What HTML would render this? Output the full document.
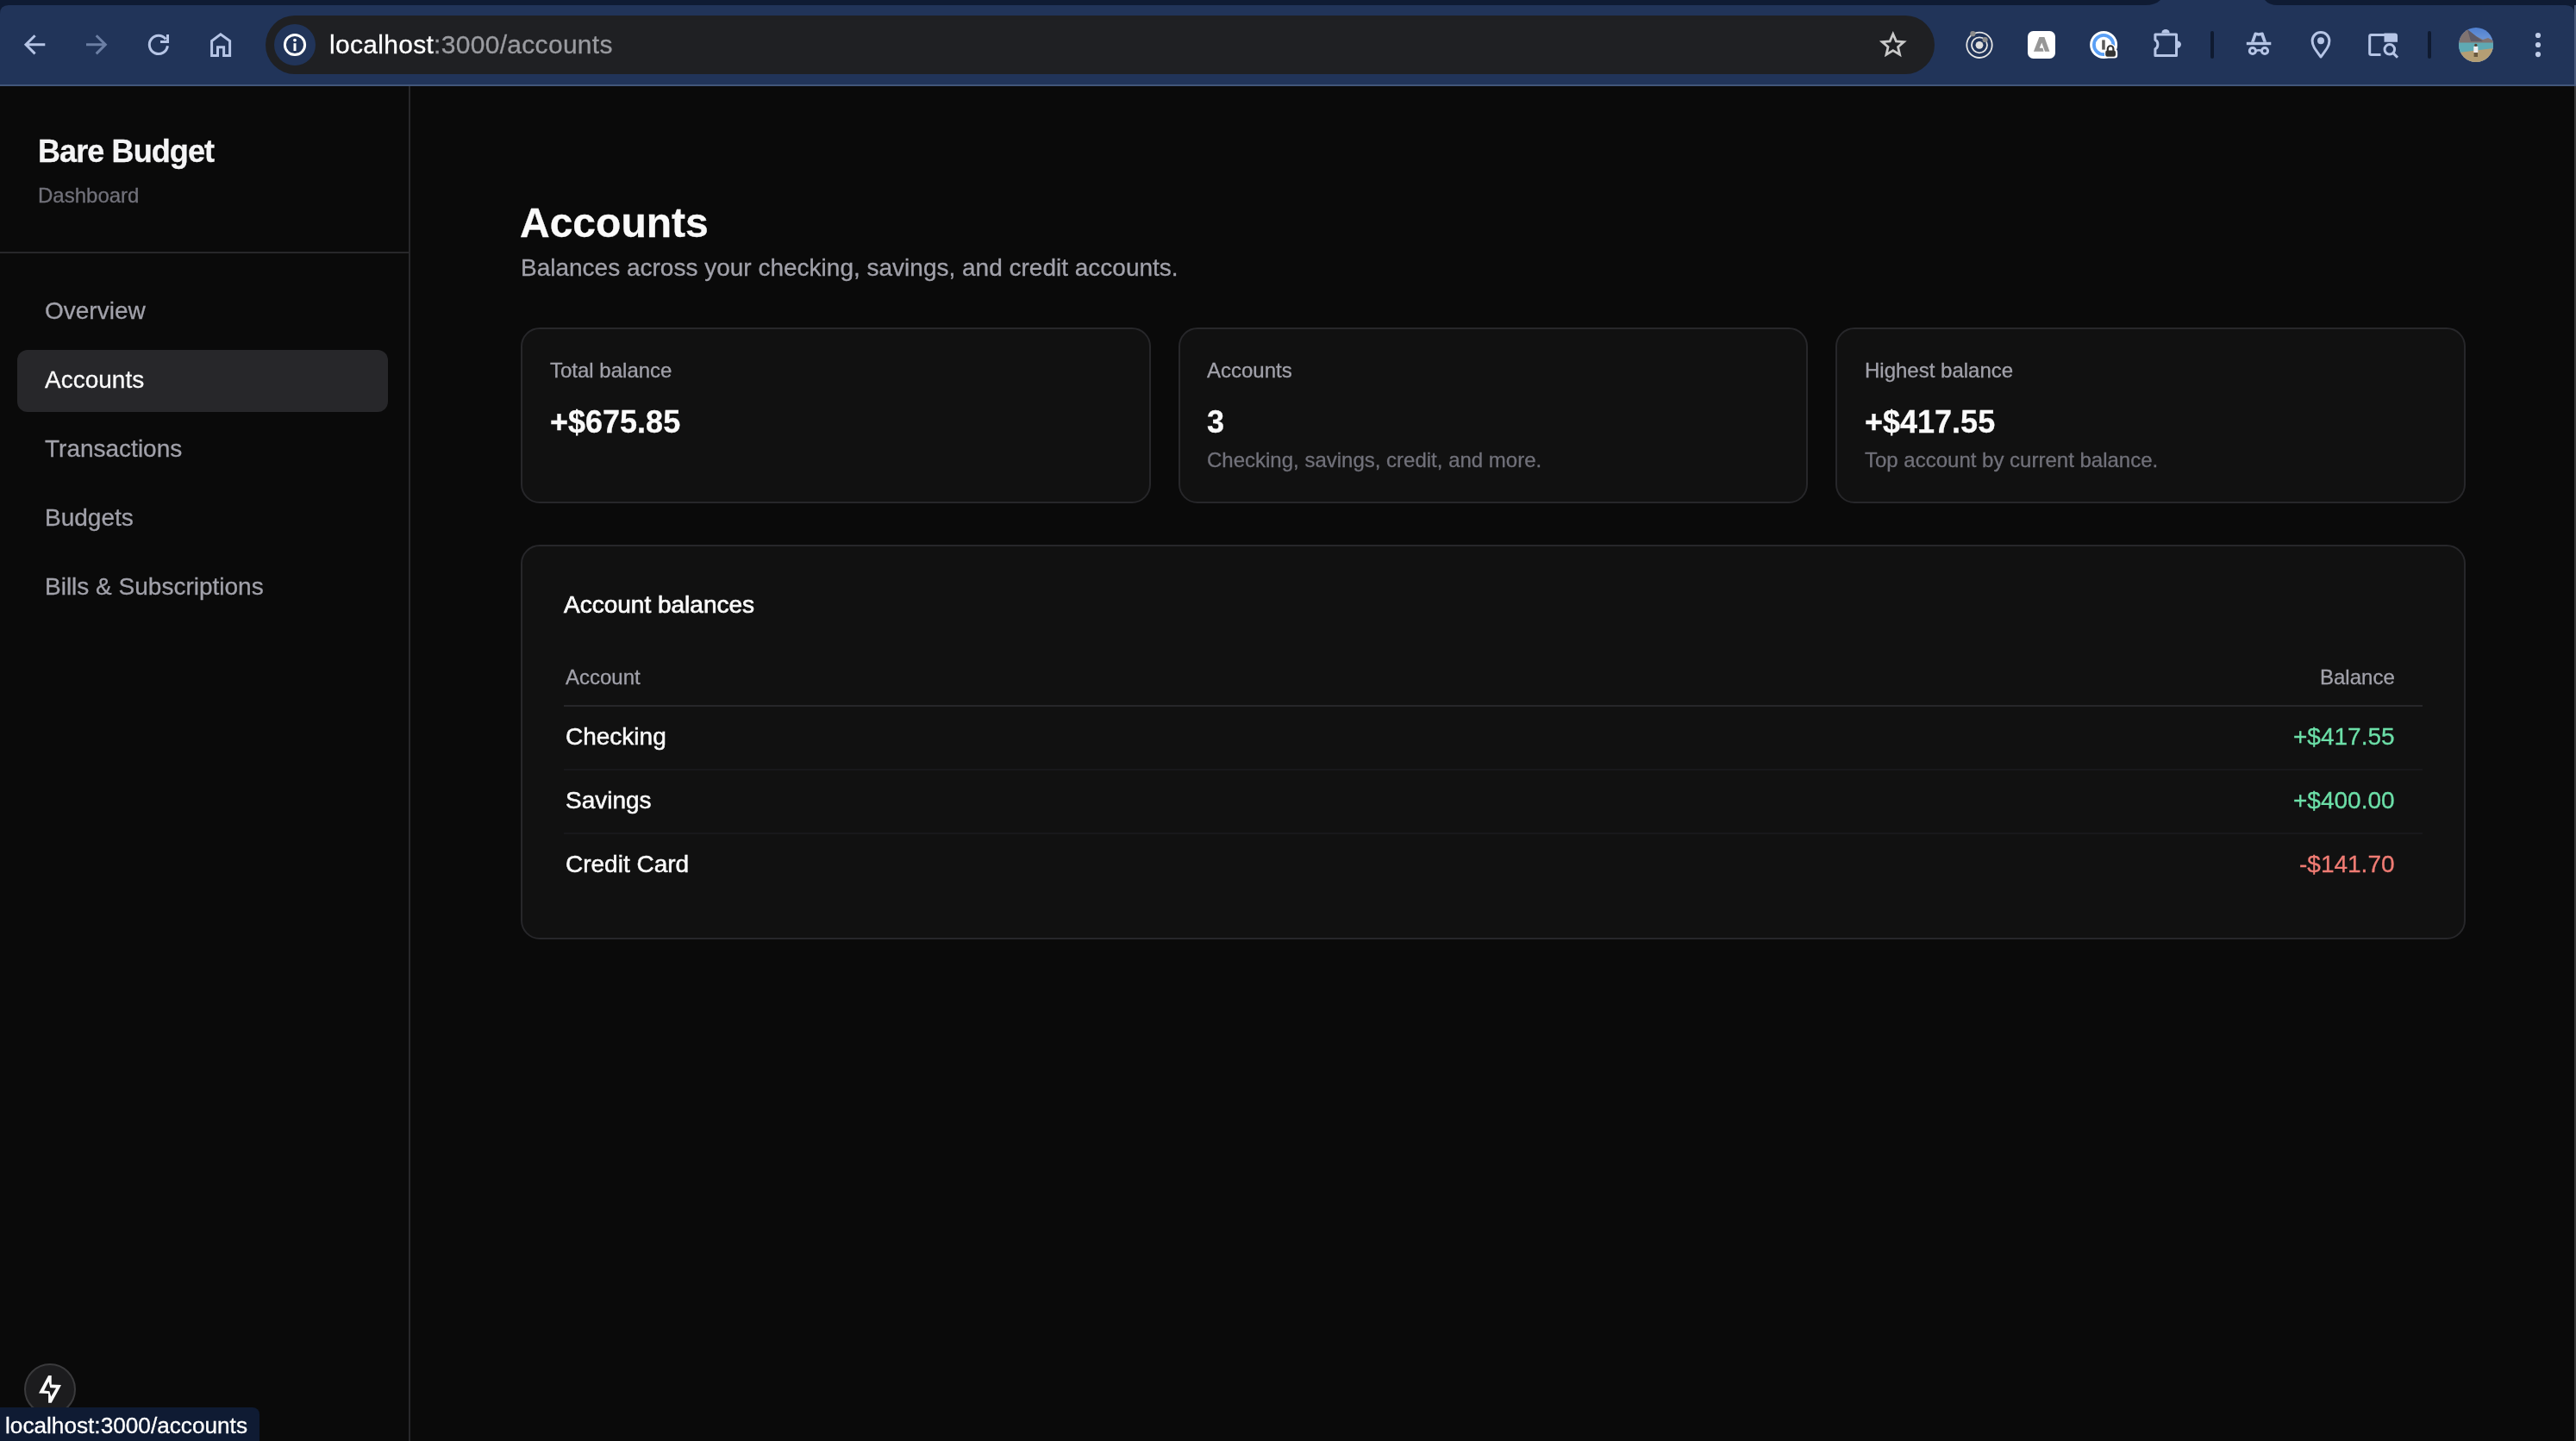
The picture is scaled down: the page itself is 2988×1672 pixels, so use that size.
<!DOCTYPE html>
<html><head><meta charset="utf-8">
<style>
*{margin:0;padding:0;box-sizing:border-box}
html,body{width:2988px;height:1672px;overflow:hidden;background:#0a0a0a;font-family:"Liberation Sans",sans-serif}
.a{position:absolute;white-space:nowrap;will-change:transform;-webkit-text-stroke:0.3px currentColor}
#side{position:absolute;left:0;top:100px;width:474px;height:1572px;background:#0a0a0a}
#sline{position:absolute;left:0;top:292px;width:474px;height:2px;background:#27272a}
#vline{position:absolute;left:474px;top:100px;width:2px;height:1572px;background:#27272a}
#pill{position:absolute;left:20px;top:406px;width:430px;height:72px;border-radius:12px;background:#27272a}
.card{position:absolute;top:380px;height:204px;width:731px;border:2px solid #27272a;border-radius:22px;background:#111111}
#tcard{position:absolute;left:604px;top:632px;width:2256px;height:458px;border:2px solid #27272a;border-radius:22px;background:#111111}
.hl{position:absolute;height:2px}
#rb{position:absolute;left:2986px;top:100px;width:2px;height:1572px;background:#3a3a3a}
</style></head><body>
<svg id="chrome" width="2988" height="100" viewBox="0 0 2988 100" style="position:absolute;left:0;top:0">
<rect x="0" y="0" width="2988" height="100" fill="#0f1b33"/>
<path d="M0 16 Q0 6 10 6 H2488 Q2500 6 2506 0 H2627 Q2632 6 2642 6 H2976 Q2986 6 2986 16 V98 H0 Z" fill="#213459"/>
<rect x="0" y="98" width="2988" height="2" fill="#42567a"/>
<rect x="2986" y="6" width="2" height="94" fill="#4a5b7c"/>
<g fill="none" stroke="#b6c5e6" stroke-width="3" stroke-linecap="butt">
<path d="M52.3 51.8 H30.5 M40.6 41.2 L30 51.8 L40.6 62.4" stroke-linejoin="miter"/>
<path d="M100 51.8 H121.8 M111.7 41.2 L122.3 51.8 L111.7 62.4" stroke="#6c7fa4"/>
<path d="M194.4 53.3 A10.6 10.6 0 1 1 192.3 45.5"/>
<path d="M186 48.5 H194.5 V40" stroke-linejoin="miter"/>
<path d="M252.5 64.6 H245.6 V47.5 L255.9 39.8 L266.6 47.5 V64.6 H259.6 V54.8 H252.5 Z" stroke-linejoin="miter"/>
</g>
<rect x="308" y="18" width="1936" height="68" rx="34" fill="#1f2023"/>
<circle cx="342" cy="52" r="24" fill="#213459"/>
<circle cx="342" cy="52" r="11.6" fill="none" stroke="#fff" stroke-width="3"/>
<circle cx="342" cy="46.6" r="1.9" fill="#fff"/>
<rect x="340.5" y="50.2" width="3" height="8.8" fill="#fff"/>
<path transform="translate(2195.8 52) scale(0.93) translate(-2195.8 -52)" d="M2195.8 38.5 L2199.7 47.6 L2209.3 48.4 L2202 54.7 L2204.2 64.2 L2195.8 59.1 L2187.4 64.2 L2189.6 54.7 L2182.3 48.4 L2191.9 47.6 Z" fill="none" stroke="#c9c9c9" stroke-width="3" stroke-linejoin="miter"/>
<circle cx="2296" cy="52.3" r="14.7" fill="none" stroke="#e6e6e6" stroke-width="1.8"/>
<circle cx="2296" cy="52.3" r="9" fill="none" stroke="#e6e6e6" stroke-width="1.8"/>
<circle cx="2296" cy="52.3" r="4.4" fill="#dedede"/>
<circle cx="2288.4" cy="39.2" r="3.1" fill="#8c8c8c"/>
<circle cx="2302.6" cy="46" r="3.1" fill="#8c8c8c"/>
<rect x="2352" y="36" width="32" height="32" rx="6.5" fill="#fff"/>
<path d="M2358.9 59.7 L2365.4 43 H2371.4 L2377.4 59.7 H2372 L2368.3 49.5 L2365.7 55.8 H2369.5 L2370.5 59.7 Z" fill="#979797"/>
<circle cx="2440.1" cy="52" r="16" fill="#fff"/>
<circle cx="2440.1" cy="52" r="11.2" fill="none" stroke="#5a9ff5" stroke-width="3.8"/>
<rect x="2438.2" y="46.4" width="3.5" height="11.2" fill="#595959"/>
<rect x="2441" y="57" width="15.2" height="10.6" rx="3.5" fill="#fff"/>
<path d="M2444.8 59.5 V56.5 A3.3 3.3 0 0 1 2451.4 56.5 V59.5" fill="#fff" stroke="#fff" stroke-width="5"/>
<path d="M2444.8 59.5 V56.5 A3.3 3.3 0 0 1 2451.4 56.5 V59.5" fill="none" stroke="#333" stroke-width="2.2"/>
<rect x="2442.2" y="58.6" width="11.8" height="7.2" rx="2.2" fill="#333"/>
<path d="M2499.9 39.9 H2524.5 V64.4 H2499.9 V57 C2503.5 55.5 2504.2 48 2499.9 46.3 Z" fill="none" stroke="#b6c5e6" stroke-width="3" stroke-linejoin="round"/>
<path d="M2507.3 38.6 A4.7 4.7 0 0 1 2516.7 38.6 Z" fill="#b6c5e6"/>
<path d="M2525.8 47.4 A4.2 4.2 0 0 1 2525.8 55.8 Z" fill="#b6c5e6"/>
<rect x="2564" y="36" width="4" height="32" rx="2" fill="#0f1a30"/>
<rect x="2816" y="36" width="4" height="32" rx="2" fill="#0f1a30"/>
<g fill="#b6c5e6">
<rect x="2605.8" y="48.8" width="28.5" height="3.4"/>
<path d="M2611 48.8 L2614.6 38.4 Q2615.1 37.3 2616.3 37.5 L2619.3 38.1 Q2620 38.5 2620.7 38.1 L2624 37.5 Q2625.2 37.3 2625.6 38.4 L2629.1 48.8 H2625.3 L2622.5 41.2 L2620 41.8 L2617.3 41.2 L2614.8 48.8 Z"/>
</g>
<g fill="none" stroke="#b6c5e6" stroke-width="3">
<circle cx="2612.9" cy="59" r="3.6"/>
<circle cx="2627" cy="59" r="3.6"/>
<path d="M2616.2 59.2 Q2620 57.2 2623.8 59.2" stroke-width="2.4"/>
<path d="M2692 66 C2686 58 2682.1 53.5 2682.1 47.3 A9.9 9.9 0 0 1 2701.9 47.3 C2701.9 53.5 2698 58 2692 66 Z" stroke-linejoin="round"/>
<path d="M2761.5 63.6 H2750.5 Q2748.7 63.6 2748.7 61.8 V42.2 Q2748.7 40.4 2750.5 40.4 H2766"/>
<circle cx="2771.8" cy="57.3" r="5.8"/>
<path d="M2776 61.6 L2781 66.8"/>
</g>
<circle cx="2692" cy="47.3" r="4" fill="#b6c5e6"/>
<path d="M2765.5 38.6 H2778 Q2781 38.6 2781 41.6 V48.8 H2765.5 Z" fill="#b6c5e6"/>
<defs><clipPath id="av"><circle cx="2872" cy="52" r="20"/></clipPath>
<linearGradient id="sky" x1="0" y1="0" x2="0" y2="1"><stop offset="0" stop-color="#4f7fcf"/><stop offset="1" stop-color="#9dbde6"/></linearGradient></defs>
<g clip-path="url(#av)">
<rect x="2852" y="32" width="40" height="40" fill="url(#sky)"/>
<path d="M2852 51 L2852 42 L2862 34 L2872 42 L2880 46 L2886 44 L2892 47 L2892 51 Z" fill="#7f7371"/>
<path d="M2862 34 L2872 42 L2880 48 L2866 48 Z" fill="#5d5a66"/>
<rect x="2852" y="49.5" width="40" height="12" fill="#5fa9b3"/>
<path d="M2852 61 L2892 56 L2892 72 L2852 72 Z" fill="#b49e74"/>
<rect x="2869.3" y="54" width="5" height="7" fill="#f0eef0"/>
<rect x="2869.6" y="61" width="4.4" height="5" fill="#6b5a40"/>
<circle cx="2871.8" cy="52.3" r="1.6" fill="#5a3e30"/>
</g>
<g fill="#bfcce8"><circle cx="2944" cy="41" r="3.1"/><circle cx="2944" cy="52" r="3.1"/><circle cx="2944" cy="63.1" r="3.1"/></g>
</svg>
<div class="a" style="left:382px;top:28px;font-size:30px;line-height:48px;color:#fff;letter-spacing:0.3px">localhost<span style="color:#9a9ba0">:3000/accounts</span></div>

<div id="side"></div>
<div id="sline"></div>
<div id="vline"></div>
<div id="pill"></div>
<div class="a" style="left:44px;top:152px;font-size:36px;line-height:48px;font-weight:bold;color:#f4f4f5;letter-spacing:-0.9px">Bare Budget</div>
<div class="a" style="left:44px;top:211px;font-size:24px;line-height:32px;color:#71717a">Dashboard</div>
<div class="a" style="left:52px;top:341px;font-size:28px;line-height:40px;color:#a1a1aa">Overview</div>
<div class="a" style="left:52px;top:421px;font-size:28px;line-height:40px;color:#fafafa">Accounts</div>
<div class="a" style="left:52px;top:501px;font-size:28px;line-height:40px;color:#a1a1aa">Transactions</div>
<div class="a" style="left:52px;top:581px;font-size:28px;line-height:40px;color:#a1a1aa">Budgets</div>
<div class="a" style="left:52px;top:661px;font-size:28px;line-height:40px;color:#a1a1aa">Bills &amp; Subscriptions</div>

<div class="a" style="left:603px;top:227px;font-size:48px;line-height:64px;font-weight:bold;color:#fafafa">Accounts</div>
<div class="a" style="left:604px;top:291px;font-size:28px;line-height:40px;color:#a1a1aa">Balances across your checking, savings, and credit accounts.</div>

<div class="card" style="left:604px"></div>
<div class="card" style="left:1367px;width:730px"></div>
<div class="card" style="left:2129px"></div>

<div class="a" style="left:638px;top:414px;font-size:24px;line-height:32px;color:#a1a1aa">Total balance</div>
<div class="a" style="left:638px;top:466px;font-size:36px;line-height:48px;font-weight:bold;color:#fafafa">+$675.85</div>

<div class="a" style="left:1400px;top:414px;font-size:24px;line-height:32px;color:#a1a1aa">Accounts</div>
<div class="a" style="left:1400px;top:466px;font-size:36px;line-height:48px;font-weight:bold;color:#fafafa">3</div>
<div class="a" style="left:1400px;top:518px;font-size:24px;line-height:32px;color:#71717a">Checking, savings, credit, and more.</div>

<div class="a" style="left:2163px;top:414px;font-size:24px;line-height:32px;color:#a1a1aa">Highest balance</div>
<div class="a" style="left:2163px;top:466px;font-size:36px;line-height:48px;font-weight:bold;color:#fafafa">+$417.55</div>
<div class="a" style="left:2163px;top:518px;font-size:24px;line-height:32px;color:#71717a">Top account by current balance.</div>

<div id="tcard"></div>
<div class="a" style="left:654px;top:682px;font-size:28px;line-height:40px;color:#fafafa;-webkit-text-stroke:0.7px #fafafa">Account balances</div>
<div class="a" style="left:656px;top:770px;font-size:24px;line-height:32px;color:#a1a1aa">Account</div>
<div class="a" style="right:210px;top:770px;font-size:24px;line-height:32px;color:#a1a1aa">Balance</div>
<div class="hl" style="left:654px;top:818px;width:2156px;background:#27272a"></div>
<div class="a" style="left:656px;top:835px;font-size:28px;line-height:40px;color:#fafafa;-webkit-text-stroke:0.5px #fafafa">Checking</div>
<div class="a" style="right:210px;top:835px;font-size:28px;line-height:40px;color:#6cdfa8">+$417.55</div>
<div class="hl" style="left:654px;top:892px;width:2156px;background:#18181b"></div>
<div class="a" style="left:656px;top:909px;font-size:28px;line-height:40px;color:#fafafa;-webkit-text-stroke:0.5px #fafafa">Savings</div>
<div class="a" style="right:210px;top:909px;font-size:28px;line-height:40px;color:#6cdfa8">+$400.00</div>
<div class="hl" style="left:654px;top:966px;width:2156px;background:#18181b"></div>
<div class="a" style="left:656px;top:983px;font-size:28px;line-height:40px;color:#fafafa;-webkit-text-stroke:0.5px #fafafa">Credit Card</div>
<div class="a" style="right:210px;top:983px;font-size:28px;line-height:40px;color:#f07c74">-$141.70</div>

<div id="rb"></div>
<div style="position:absolute;left:28px;top:1582px;width:60px;height:60px;border-radius:50%;background:#1c1c1e;border:2px solid #3a3a3c"></div>
<svg width="60" height="60" viewBox="0 0 60 60" style="position:absolute;left:28px;top:1582px">
<path fill-rule="evenodd" d="M28.1 14 H31.7 V24.6 L43 25 L31.7 45.8 H28.1 V35 L17 34.5 Z M28.5 21 L30.3 28.2 L37.1 28.4 L31.2 38.5 L29.4 32.2 L23.1 31.6 Z" fill="#fafafa"/>
</svg>
<div style="position:absolute;left:0;top:1633px;width:301px;height:39px;background:#0f1b33;border-top-right-radius:8px"></div>
<div class="a" style="left:6px;top:1638px;font-size:26.2px;line-height:32px;color:#fff">localhost:3000/accounts</div>
</body></html>
